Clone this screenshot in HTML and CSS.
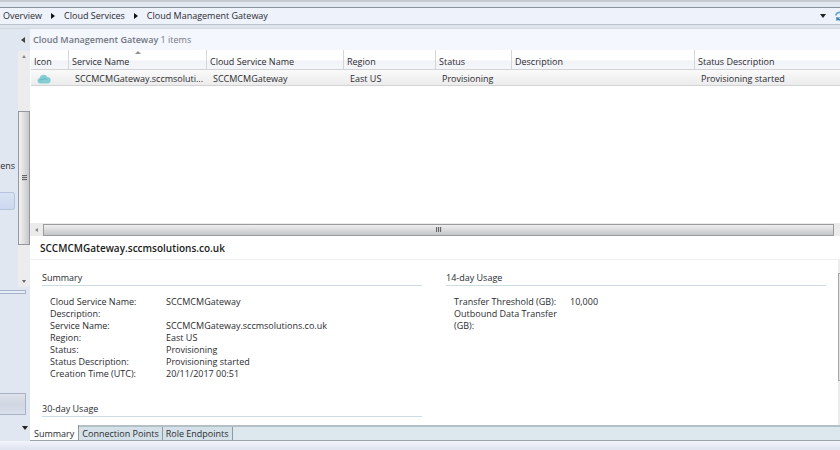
FILE: index.html
```html
<!DOCTYPE html>
<html lang="en">
<head>
    <meta charset="UTF-8">
    <meta name="viewport" content="width=device-width, initial-scale=1.0">
    <title>Cloud Management Gateway</title>
    <link rel="stylesheet" href="styles.css">
</head>
<body>
    <header class="topbar">
        <nav class="breadcrumb">
            <a href="#">Overview</a>
            <span class="arrow right"></span>
            <a href="#">Cloud Services</a>
            <span class="arrow right"></span>
            <a href="#">Cloud Management Gateway</a>
        </nav>
        <button class="icon-btn" aria-label="History"><span class="arrow down"></span></button>
        <button class="icon-btn refresh" aria-label="Refresh">
            <svg width="12" height="12" viewBox="0 0 12 12">
                <path d="M1 5.500C1.500 2.500 5 .5 8 2.200L9.300 1l.7 4-4.200-.2 1.100-1.200C5 2.700 3.300 3.600 2.800 5.500z" fill="#58a9cf"/>
                <path d="M11 6.800c-.5 3-4 5-7 3.300L2.600 11.300 2 7.200l4.200.3L5 8.700c2 .9 3.700 0 4.200-1.900z" fill="#3a86b5"/>
            </svg>
        </button>
    </header>

    <div class="workspace">
        <!-- Navigation pane -->
        <aside class="sidebar">
            <button class="collapse" aria-label="Collapse"><span class="arrow left"></span></button>
            <div class="tree">
                <div class="tree-items">
                    <a href="#" class="tree-item">ens</a>
                    <a href="#" class="tree-item selected" aria-label="Cloud Management Gateway"></a>
                </div>
                <div class="vscroll">
                    <span class="arrow up small"></span>
                    <div class="vthumb"><span class="grip"></span></div>
                    <span class="arrow down small"></span>
                </div>
            </div>
            <div class="splitter"></div>
            <div class="workspaces">
                <button class="workspace-btn" aria-label="Administration"></button>
                <button class="more" aria-label="More"><span class="arrow down"></span></button>
            </div>
        </aside>

        <main class="content">
            <h1 class="list-title"><b>Cloud Management Gateway</b> 1 items</h1>
            <section class="list">
                <table>
                    <colgroup>
                        <col class="c-icon">
                        <col class="c-name">
                        <col class="c-cloud">
                        <col class="c-region">
                        <col class="c-status">
                        <col class="c-desc">
                        <col>
                    </colgroup>
                    <thead>
                        <tr>
                            <th>Icon</th>
                            <th class="sorted">Service Name</th>
                            <th>Cloud Service Name</th>
                            <th>Region</th>
                            <th>Status</th>
                            <th>Description</th>
                            <th>Status Description</th>
                        </tr>
                    </thead>
                    <tbody>
                        <tr>
                            <td class="icon-cell">
                                <svg width="14" height="10" viewBox="0 0 14 10">
                                    <path d="M3 9.500A2.800 2.800 0 0 1 2.600 4 4.200 4.200 0 0 1 10.400 3 3.300 3.300 0 0 1 11.200 9.500z" fill="#83cdd3"/>
                                    <path d="M3 6.500C4 4.500 5.500 5 6 6c1-2 3-2 4 0" fill="none" stroke="#5eb5c0"/>
                                </svg>
                            </td>
                            <td>SCCMCMGateway.sccmsoluti...</td>
                            <td>SCCMCMGateway</td>
                            <td>East US</td>
                            <td>Provisioning</td>
                            <td></td>
                            <td>Provisioning started</td>
                        </tr>
                    </tbody>
                </table>
            </section>
            <div class="hscroll">
                <span class="arrow left small"></span>
                <div class="hthumb"><span class="grip"></span></div>
            </div>

            <section class="details">
                <h2>SCCMCMGateway.sccmsolutions.co.uk</h2>
                <div class="details-body">
                    <div class="panels">
                        <div class="panel">
                            <h3>Summary</h3>
                            <dl>
                                <dt>Cloud Service Name:</dt><dd>SCCMCMGateway</dd>
                                <dt>Description:</dt><dd></dd>
                                <dt>Service Name:</dt><dd>SCCMCMGateway.sccmsolutions.co.uk</dd>
                                <dt>Region:</dt><dd>East US</dd>
                                <dt>Status:</dt><dd>Provisioning</dd>
                                <dt>Status Description:</dt><dd>Provisioning started</dd>
                                <dt>Creation Time (UTC):</dt><dd>20/11/2017 00:51</dd>
                            </dl>
                        </div>
                        <div class="panel">
                            <h3>14-day Usage</h3>
                            <dl>
                                <dt>Transfer Threshold (GB):</dt><dd>10,000</dd>
                                <dt>Outbound Data Transfer (GB):</dt><dd></dd>
                            </dl>
                        </div>
                        <div class="panel">
                            <h3>30-day Usage</h3>
                        </div>
                    </div>
                    <div class="details-scroll"><div class="details-thumb"></div></div>
                </div>
                <div class="tabs">
                    <button class="tab active">Summary</button>
                    <button class="tab">Connection Points</button>
                    <button class="tab">Role Endpoints</button>
                </div>
            </section>
        </main>
    </div>
    <footer class="statusbar"></footer>
</body>
</html>
```
FILE: styles.css
```css
* {
    margin: 0;
    padding: 0;
    box-sizing: border-box;
}
body {
    display: flex;
    flex-direction: column;
    min-height: 100vh;
    overflow: hidden;
    font-family: "Open Sans", "Noto Sans", sans-serif;
    font-size: 9px;
    line-height: 12px;
    color: #2b2b30;
    background: #e1e7f1;
}
a {
    color: inherit;
    text-decoration: none;
}
button {
    border: none;
    background: none;
    font: inherit;
    color: inherit;
}

/* arrows */
.arrow {
    flex: none;
    width: 0;
    height: 0;
    border: 3px solid transparent;
}
.arrow.right {
    border-left: 4px solid #111;
    border-right: none;
}
.arrow.left {
    border-right: 4px solid #444;
    border-left: none;
}
.arrow.down {
    border-top: 4px solid #222;
    border-bottom: none;
}
.arrow.small {
    border-width: 2px;
}
.arrow.small.up {
    border-bottom: 3px solid #888;
    border-top: none;
}
.arrow.small.down {
    border-top: 3px solid #666;
}
.arrow.small.left {
    border-right: 3px solid #888;
}

/* top bar */
.topbar {
    display: flex;
    align-items: center;
    height: 29px;
    padding-top: 7px;
    padding-bottom: 4px;
    background: linear-gradient(#c6cad2 0 2px, #e2e7f0 2px 7px, #89919d 7px 8px, #edf2fb 8px 24px, #bcc3cc 24px 25px, #dfe5ec 25px 28px, #d5dadf 28px);
}
.breadcrumb {
    display: flex;
    align-items: center;
    flex: 1;
    gap: 9px;
    padding-left: 3px;
}
.icon-btn {
    display: flex;
    align-items: center;
    justify-content: center;
    width: 14px;
    height: 16px;
}
.icon-btn.refresh {
    width: 12px;
    margin-right: -6px;
    margin-left: 4px;
}

/* navigation pane */
.workspace {
    display: flex;
    flex: 1;
}
.sidebar {
    display: flex;
    flex: none;
    flex-direction: column;
    width: 30px;
}
.collapse {
    display: flex;
    align-items: center;
    justify-content: flex-end;
    height: 22px;
    padding-right: 5px;
}
.tree {
    display: flex;
    height: 236px;
}
.tree-items {
    flex: 1;
    min-width: 0;
    padding-top: 106px;
}
.tree-item {
    display: flex;
    justify-content: flex-end;
    height: 18px;
    margin-right: 3px;
    margin-bottom: 17px;
    line-height: 18px;
}
.tree-item.selected {
    border: 1px solid #b5c4df;
    border-left: none;
    border-radius: 0 3px 3px 0;
    background: linear-gradient(#d9e3f5, #cbd8ee);
}
.vscroll {
    display: flex;
    flex: none;
    flex-direction: column;
    align-items: center;
    width: 12px;
    padding: 4px 0;
    background: #ececec;
}
.vthumb {
    display: flex;
    align-items: center;
    justify-content: center;
    width: 12px;
    height: 134px;
    margin-top: 53px;
    margin-bottom: auto;
    border: 1px solid #94979b;
    background: linear-gradient(90deg, #f2f2f2, #e0e0e1 45%, #c7c8ca);
}
.grip {
    width: 5px;
    height: 6px;
    background: repeating-linear-gradient(#666 0 1px, #ccc 1px 2px);
}
.splitter {
    height: 4px;
    margin-top: 3px;
    margin-right: 4px;
    border: 1px solid #a5b2c8;
    border-left: none;
    background: #e7eefa;
}
.workspaces {
    display: flex;
    flex-direction: column;
    flex: 1;
    justify-content: flex-end;
    padding-bottom: 11px;
}
.workspace-btn {
    height: 22px;
    margin-right: 4px;
    border: 1px solid #a9b3c5;
    border-left: none;
    background: linear-gradient(#dde2ea, #d0d7e2 50%, #d9dfec);
}
.more {
    display: flex;
    justify-content: flex-end;
    padding: 11px 2px 0 0;
}

/* list */
.content {
    display: flex;
    flex: 1;
    flex-direction: column;
    min-width: 0;
    background: #fff;
}
.list-title {
    height: 21px;
    padding-left: 3px;
    font-size: 9px;
    font-weight: 400;
    line-height: 22px;
    color: #72767f;
    background: #f4f7fe;
}
.list-title b {
    font-weight: 600;
}
.list {
    flex: 1;
    padding-left: 1px;
}
table {
    width: 100%;
    table-layout: fixed;
    border-collapse: separate;
    border-spacing: 0;
}
.c-icon { width: 38px; }
.c-name { width: 138px; }
.c-cloud { width: 137px; }
.c-region { width: 92px; }
.c-status { width: 76px; }
.c-desc { width: 183px; }
th {
    position: relative;
    height: 19px;
    padding: 4px 3px 0;
    border-right: 1px solid #d4d6da;
    font-weight: 400;
    text-align: left;
    background: linear-gradient(#fff 50%, #f2f3f8 60%, #f5f6fa);
}
th:last-child {
    border-right: none;
}
.sorted::after {
    content: "";
    position: absolute;
    top: 1px;
    left: 50%;
    margin-left: -3px;
    border: 3px solid transparent;
    border-top: none;
    border-bottom-color: #8d8f92;
}
td {
    height: 17px;
    padding: 2px 0 0 6px;
    white-space: nowrap;
    border-top: 1px solid #d3d3d5;
    border-bottom: 1px solid #d3d3d5;
    background: linear-gradient(#fafafa, #ececec);
}
.icon-cell svg {
    display: block;
}

/* horizontal scroll bar */
.hscroll {
    display: flex;
    align-items: center;
    height: 13px;
    padding: 0 6px 0 5px;
    background: #ebebec;
}
.hthumb {
    display: flex;
    align-items: center;
    justify-content: center;
    flex: 1;
    height: 12px;
    margin-left: 5px;
    border: 1px solid #999b9e;
    background: linear-gradient(#efefef, #dcdcdd 45%, #c4c5c7);
}
.hthumb .grip {
    width: 6px;
    height: 5px;
    background: repeating-linear-gradient(90deg, #666 0 1px, #ccc 1px 2px);
}

/* details */
.details h2 {
    height: 24px;
    padding-left: 10px;
    border-bottom: 1px solid #f0f0f2;
    font-size: 10px;
    font-weight: 600;
    line-height: 24px;
    color: #1c1c20;
}
.details-body {
    display: flex;
    height: 165px;
}
.panels {
    display: grid;
    flex: 1;
    grid-template-columns: 1fr 1fr;
    align-content: start;
    gap: 23px 24px;
    padding: 12px 12px 0 12px;
}
.panel h3 {
    height: 14px;
    border-bottom: 1px solid #cbdde2;
    font-size: 9px;
    font-weight: 400;
    line-height: 12px;
}
.panel dl {
    display: grid;
    grid-template-columns: 108px 1fr;
    column-gap: 8px;
    padding: 10px 8px 0;
}
.panel dt,
.panel dd {
    min-height: 12px;
}
.details-scroll {
    width: 2px;
    padding-top: 13px;
    background: #ececec;
}
.details-thumb {
    height: 108px;
    border: 1px solid #a4a7aa;
    border-right: none;
    background: #e4e4e5;
}
.tabs {
    display: flex;
    height: 16px;
    border-top: 2px solid #b4c0c6;
    border-bottom: 1px solid #98a5ac;
    background: #dde8ee;
}
.tab {
    height: 13px;
    padding: 0 3px;
    border-right: 1px solid #8e9ba3;
    line-height: 13px;
    background: #d5e1e9;
}
.tab.active {
    height: 15px;
    margin-top: -2px;
    padding: 2px 4px 0;
    background: #fff;
}
.statusbar {
    height: 9px;
    background: linear-gradient(#f2f4fc, #dfe3ef);
}
```
